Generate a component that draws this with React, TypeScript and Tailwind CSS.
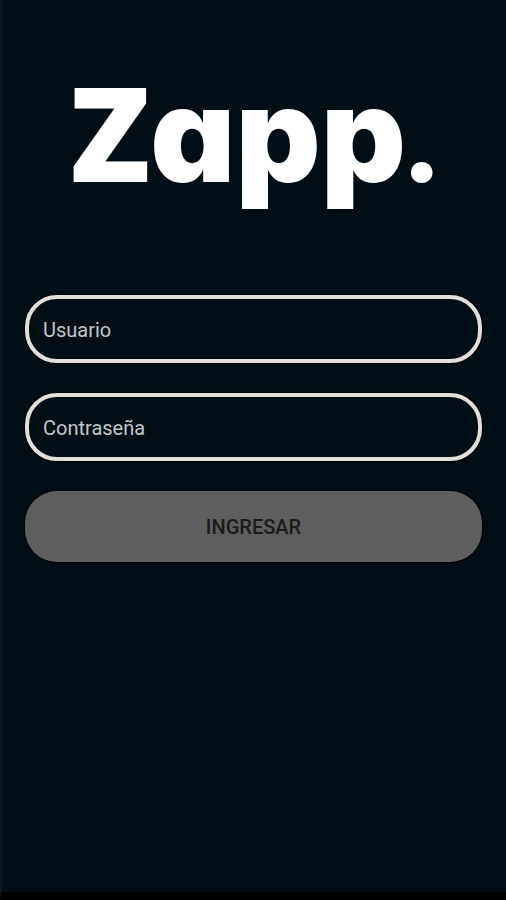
// Login screen: wordmark, credentials and submit button

interface FieldProps {
  id: string;
  label: string;
  type: string;
}

function Field({ id, label, type }: FieldProps) {
  return (
    <input
      id={id}
      name={id}
      type={type}
      aria-label={label}
      placeholder={label}
      className="block h-[68px] w-full rounded-[32px] border-4 border-[#e2deda] bg-transparent px-3.5 pt-0.5 text-xl text-[#c4c6c8] shadow-[0_0_2px_1px_#000000] outline-none placeholder:text-[#c4c6c8]"
    />
  );
}

export default function App() {
  return (
    <div className="flex min-h-screen flex-col border-b-8 border-l-2 border-b-black border-l-[#06161d] bg-[#000f16] font-['Roboto','Liberation_Sans',sans-serif]">
      <main className="flex flex-1 flex-col pr-6 pl-[23px]">
        <h1 className="h-[295px] pt-[61px] text-center font-['Inter',sans-serif] text-[132px] leading-[140px] font-black text-white [font-feature-settings:'cv11']">
          <span className="font-['Open_Sans',sans-serif] font-extrabold">Z</span>app
          <span className="font-['Lato',sans-serif]">.</span>
        </h1>
        <form className="flex flex-col gap-[30px]" onSubmit={(e) => e.preventDefault()}>
          <Field id="usuario" label="Usuario" type="text" />
          <Field id="contrasena" label="Contraseña" type="password" />
          <button
            type="submit"
            className="h-[71px] w-full rounded-[32px] bg-[#5e5e5e] text-xl font-medium text-[#1b1b1b] shadow-[0_0_2px_1px_#000000]"
          >
            INGRESAR
          </button>
        </form>
      </main>
    </div>
  );
}
